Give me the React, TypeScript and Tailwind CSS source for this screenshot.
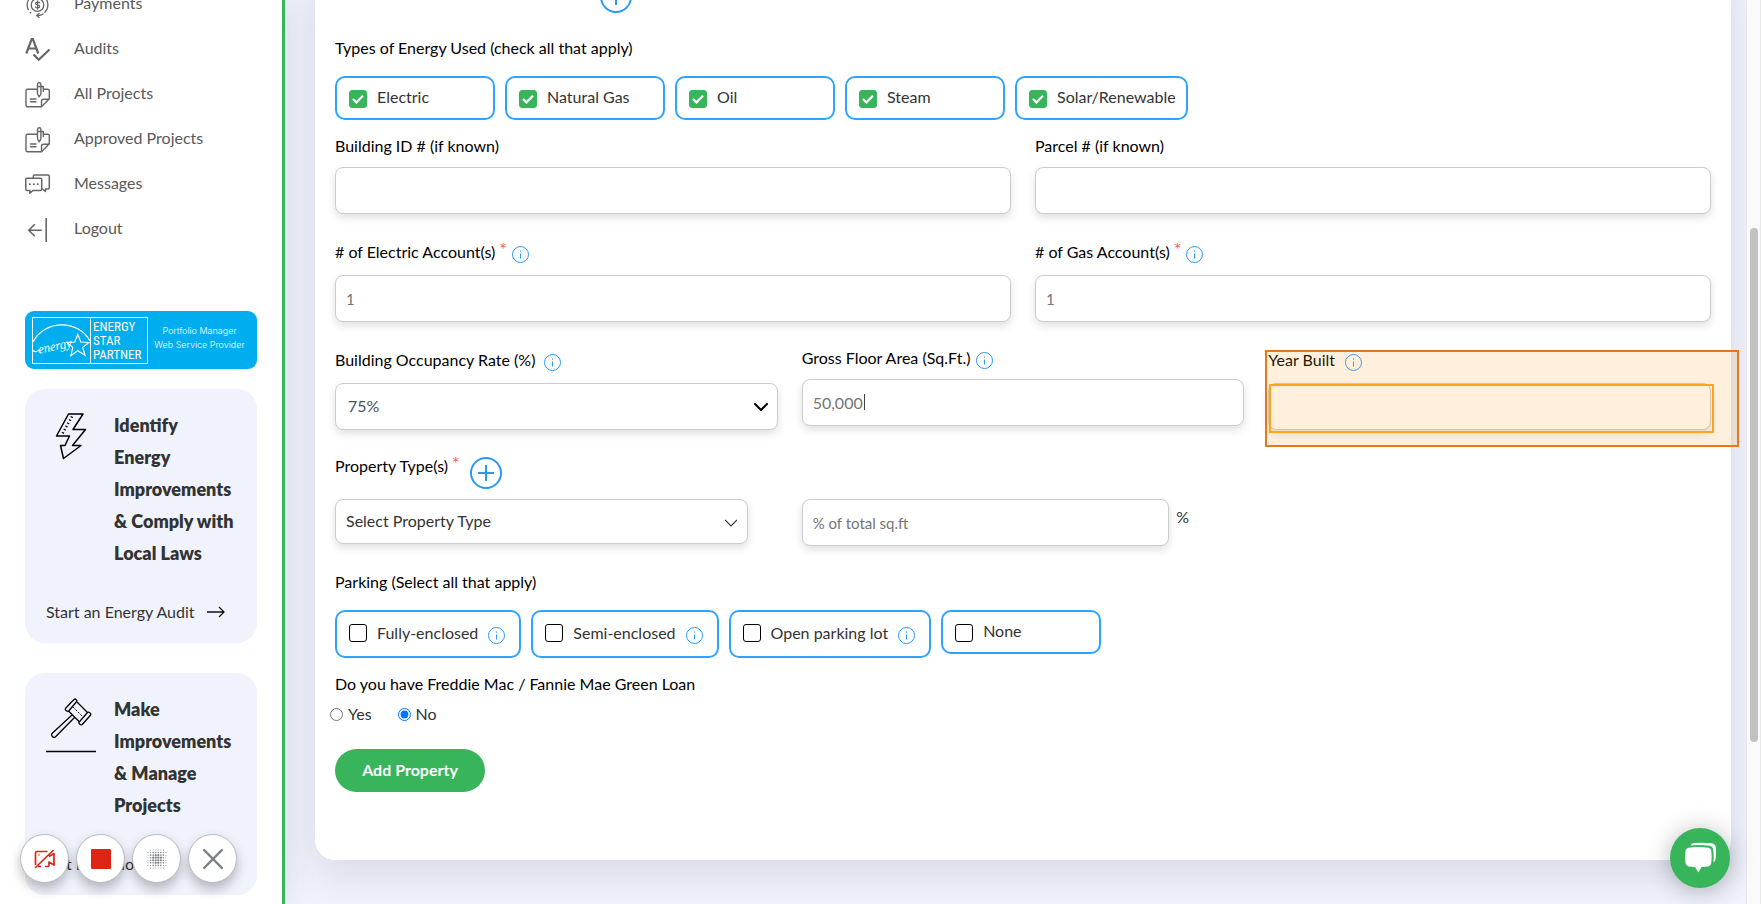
import React from "react";

const LABEL = "pb-[2px] text-base leading-[22px] text-black";
const FIELD =
  "block h-[47px] w-full rounded-lg border border-[#cccccc] bg-white shadow-[0_4px_8px_rgba(0,0,0,0.12)] outline-none";

function InfoIcon() {
  return (
    <svg width="17" height="17" viewBox="0 0 17 17" fill="none" stroke="#2699fb" className="mt-[5px] shrink-0" aria-hidden="true">
      <circle cx="8.5" cy="8.5" r="8" />
      <path d="M8.5 7.5v5M8.5 4.5v1.2" />
    </svg>
  );
}

function Star() {
  return <span className="-mt-1 ml-1 text-lg leading-6 text-[#ff5a5a]">*</span>;
}

function AddButton({ label }: { label: string }) {
  return (
    <button
      type="button"
      aria-label={label}
      className="flex size-8 shrink-0 items-center justify-center rounded-full border-2 border-[#2699fb] text-[#2699fb]"
    >
      <svg width="16" height="16" viewBox="0 0 16 16" fill="none" stroke="currentColor" strokeWidth="2" aria-hidden="true">
        <path d="M8 0v16M0 8h16" />
      </svg>
    </button>
  );
}

function PaymentsIcon() {
  return (
    <svg width="26" height="26" viewBox="0 0 26 26" fill="none" stroke="#666" strokeWidth="1.3" strokeLinecap="round" aria-hidden="true">
      <circle cx="12.5" cy="13" r="6.3" />
      <path d="M14.6 10.8c-.4-.9-3.9-1.2-4 .6 0 1.9 4.1 1.1 4.1 3.1-.1 1.8-3.7 1.7-4.2.4M12.6 9v8" />
      <path d="M19.8 20.3A10.3 10.3 0 0 0 17 3.7M8 3.7A10.3 10.3 0 0 0 3.2 17.5M12 23.5c2.5.2 4.5-.4 6-1.500M14 21.500l-2.300 2 2.300 2M5.300 20.500l.3.300" />
    </svg>
  );
}

function AuditsIcon() {
  return (
    <svg width="26" height="26" viewBox="0 0 26 26" fill="none" stroke="#666" strokeWidth="2.200" aria-hidden="true">
      <path d="M1.300 16.500L6.700 2h1.200l5.400 14.500M3.500 11.500h7.800" />
      <path d="M8.500 17.500l5.200 5.300L24.500 12.500" />
    </svg>
  );
}

function ProjectsIcon() {
  return (
    <svg width="26" height="26" viewBox="0 0 26 26" fill="none" stroke="#666" strokeWidth="1.400" strokeLinejoin="round" strokeLinecap="round" aria-hidden="true">
      <path d="M12 7.200H2.500a1.500 1.500 0 0 0-1.500 1.500v14.600a1.500 1.500 0 0 0 1.500 1.500h14l7.800-8V8.700a1.500 1.500 0 0 0-1.500-1.500h-3.500" />
      <path d="M16.500 24.500v-5.300a2 2 0 0 1 2-2h5.300" />
      <path d="M12.500 12V2.500a1.700 1.700 0 0 1 3.400 0V12l-1.700 2.800zM12.500 4.500h3.400M16 4.500h2.300v5" />
      <path d="M5.500 17h5.500M5.500 19.800h5.500" />
    </svg>
  );
}

function MessagesIcon() {
  return (
    <svg width="26" height="26" viewBox="0 0 26 26" fill="none" stroke="#666" strokeWidth="1.500" strokeLinejoin="round" strokeLinecap="round" aria-hidden="true">
      <path d="M2 6.200h13.500a1.200 1.200 0 0 1 1.200 1.200v9.800a1.200 1.200 0 0 1-1.200 1.200H8L4.800 21.200v-2.800H2a1.200 1.200 0 0 1-1.200-1.200V7.400A1.200 1.200 0 0 1 2 6.200z" />
      <path d="M8.300 6V4.200A1.200 1.200 0 0 1 9.500 3h13.600a1.200 1.200 0 0 1 1.200 1.200v11.600a1.200 1.200 0 0 1-1.200 1.200h-2.600v2.500L17.500 17" />
      <path d="M4.800 12.200h.2M8.700 12.200h.2M12.600 12.200h.2" strokeWidth="1.800" />
    </svg>
  );
}

function LogoutIcon() {
  return (
    <svg width="26" height="26" viewBox="0 0 26 26" fill="none" stroke="#666" strokeWidth="1.600" aria-hidden="true">
      <path d="M21.200 1v24M16.800 13.200H4M9.800 7.200l-6 6 6 6" />
    </svg>
  );
}

const NAV = [
  { label: "Payments", Icon: PaymentsIcon },
  { label: "Audits", Icon: AuditsIcon },
  { label: "All Projects", Icon: ProjectsIcon },
  { label: "Approved Projects", Icon: ProjectsIcon },
  { label: "Messages", Icon: MessagesIcon },
  { label: "Logout", Icon: LogoutIcon },
];

function BoltIcon() {
  return (
    <svg width="50" height="60" viewBox="0 0 50 60" fill="none" stroke="#000" strokeWidth="1.500" strokeLinejoin="round" className="shrink-0" aria-hidden="true">
      <path d="M22.500 5H37L27 20.500h12.500L26.500 36.500h8.500L17.500 49.500 14.500 36.500h4.500l4.500-9.500H10.500z" />
      <path d="M26 7.500L16 25.500" strokeWidth="2.500" strokeDasharray="1.200 2.400" />
    </svg>
  );
}

function GavelIcon() {
  return (
    <svg width="50" height="60" viewBox="0 0 50 60" fill="none" stroke="#000" strokeWidth="1.300" strokeLinejoin="round" className="shrink-0" aria-hidden="true">
      <path d="M25 9.500l3.500-3.300c1-.7 3 1.300 2.200 2.300l-8 9.500c-1.300 1.300-4.200-1-3.300-2.500z" />
      <path d="M31 9l10.500 10.500M22.500 18l11 11" />
      <path d="M41.500 19.500c1.200-1.200 4 1 3.200 2.500l-8.500 9.500c-1.300 1.300-4-1-3.200-2.300z" />
      <path d="M26 22L6 40.500c-1.500 1.700 1.300 5 3.300 3.500L28.500 24.500" />
      <path d="M27 14l9 9" strokeDasharray="2 1.500" strokeWidth="1" />
      <path d="M0 58.500h50" strokeWidth="1.400" />
    </svg>
  );
}

function PromoCard({ icon, title, link }: { icon: React.ReactNode; title: string; link: string }) {
  return (
    <section className="rounded-[20px] bg-[#f0f3fc] px-[21px] pt-5 pb-[15px]">
      <div className="flex gap-[18px]">
        {icon}
        <h2 className="w-[122px] text-lg leading-8 font-extrabold text-[#333]">{title}</h2>
      </div>
      <a href="#" className="mt-[27px] flex items-center gap-3 text-base leading-8 whitespace-nowrap text-[#333]">
        {link}
        <svg width="18" height="12" viewBox="0 0 18 12" fill="none" stroke="#111" strokeWidth="1.300" aria-hidden="true">
          <path d="M0 6h17M12 1l5 5-5 5" />
        </svg>
      </a>
    </section>
  );
}

function EnergyStarBadge() {
  return (
    <div className="flex h-[58px] items-center rounded-[9px] bg-[#00aeef] pr-[6px] pl-[7px] text-white">
      <div className="flex h-[47px] w-[116px] shrink-0 border border-white">
        <svg width="58" height="45" viewBox="0 0 58 45" fill="none" stroke="#fff" strokeWidth="1.200" className="shrink-0 border-r border-white" aria-label="Energy Star logo">
          <path d="M0 24C12 1 46 1 58 23" />
          <path d="M45.500 16.500l3.200 7.500 8.300.5-6.500 5 2.500 8-7.500-4.500-7 5 2-8.500-6-5 8-.5z" />
          <path d="M0 33c3 1.500 4 1 6-1" />
          <text x="6" y="36" fill="#fff" stroke="none" fontSize="13" fontStyle="italic" fontFamily="Liberation Serif, serif" transform="rotate(-12 6 36)">
            energy
          </text>
        </svg>
        <p className="pt-[2px] pl-[2px] font-['Liberation_Sans_Narrow','Roboto_Condensed','Liberation_Sans',sans-serif] text-[13px] leading-[14px]">
          ENERGY
          <br />
          STAR
          <br />
          PARTNER
        </p>
      </div>
      <p className="-mt-1 flex-1 text-center font-['Inter',sans-serif] text-[9px] leading-[14px] font-light whitespace-nowrap">
        Portfolio Manager
        <br />
        Web Service Provider
      </p>
    </div>
  );
}

function CheckChip({ id, label, checked = false, info = false }: { id: string; label: string; checked?: boolean; info?: boolean }) {
  return (
    <label
      htmlFor={id}
      className={
        "flex min-w-40 items-start rounded-[10px] border-2 border-[#2fa4ff] pl-3 text-base leading-[22px] text-[#333] " +
        (info ? "h-12 pt-[10px] pr-[14px]" : "h-11 pt-2 pr-[10px]")
      }
    >
      <span className={"relative block size-[18px] shrink-0 " + (info ? "mt-[2px]" : "mt-1")}>
        <input
          id={id}
          type="checkbox"
          defaultChecked={checked}
          className="peer block size-[18px] appearance-none rounded-[3px] border border-black bg-white checked:border-[#38b45b] checked:bg-[#38b45b]"
        />
        <svg width="18" height="18" viewBox="0 0 18 18" fill="none" stroke="#fff" strokeWidth="2.200" className="pointer-events-none absolute inset-0 hidden peer-checked:block" aria-hidden="true">
          <path d="M4 9l3.400 3.400L14 5.800" />
        </svg>
      </span>
      <span className="ml-[10px] whitespace-nowrap">{label}</span>
      {info && (
        <span className="ml-[10px]">
          <InfoIcon />
        </span>
      )}
    </label>
  );
}

function RecorderControls() {
  const button =
    "flex size-[49px] items-center justify-center rounded-full border border-[#b4bac0] bg-white shadow-[0_6px_12px_rgba(0,0,0,0.25)]";
  const dots = [0, 1, 2, 3, 4, 5, 6, 7];
  const dotSize = (r: number, c: number) => {
    const d = Math.hypot(r - 3.5, c - 3.5);
    return d > 4.5 ? 0 : d > 3.4 ? 0.5 : d > 2 ? 0.8 : 1.1;
  };
  return (
    <div className="fixed bottom-[21px] left-5 z-20 flex gap-[7px]">
      <button type="button" aria-label="Turn camera off" className={button}>
        <svg width="22" height="20" viewBox="0 0 22 20" fill="none" stroke="#e02317" strokeWidth="1.700" strokeLinejoin="round" aria-hidden="true">
          <path d="M11 17.500h2.500a1.500 1.500 0 0 0 1.500-1.500v-3l5 3V4.500L15 7.500M13.500 2.500H3A1.500 1.500 0 0 0 1.500 4v12M4 17.500h3M1 19L19.500 1M4.500 6h1" />
        </svg>
      </button>
      <button type="button" aria-label="Stop recording" className={button}>
        <span className="size-5 rounded-[1px] bg-[#e02317]" />
      </button>
      <button type="button" aria-label="Blur background" className={button}>
        <svg width="20" height="20" viewBox="0 0 20 20" fill="#7d8387" aria-hidden="true">
          {dots.map((r) => dots.map((c) => <circle key={r + "-" + c} cx={1 + c * 2.57} cy={1 + r * 2.57} r={dotSize(r, c)} />))}
        </svg>
      </button>
      <button type="button" aria-label="Close" className={button}>
        <svg width="20" height="20" viewBox="0 0 20 20" fill="none" stroke="#7d8387" strokeWidth="2.400" strokeLinecap="round" aria-hidden="true">
          <path d="M1.200 1.200l17.600 17.600M18.800 1.200L1.200 18.800" />
        </svg>
      </button>
    </div>
  );
}

export default function App() {
  return (
    <div className="flex h-screen overflow-hidden bg-white font-['Lato','Liberation_Sans',sans-serif]">
      <aside className="z-10 w-[285px] shrink-0 border-r-3 border-[#38b45b] bg-white px-[25px] shadow-[0_0_30px_rgba(60,60,100,0.12)]">
        <nav className="-mt-[18px]">
          <ul>
            {NAV.map(({ label, Icon }) => (
              <li key={label}>
                <a href="#" className="flex h-[45px] items-center gap-[23px] text-base text-[#595959]">
                  <Icon />
                  <span className="pb-[3px]">{label}</span>
                </a>
              </li>
            ))}
          </ul>
        </nav>
        <div className="mt-[59px] flex flex-col">
          <EnergyStarBadge />
          <div className="mt-5 flex flex-col gap-[30px]">
            <PromoCard icon={<BoltIcon />} title="Identify Energy Improvements & Comply with Local Laws" link="Start an Energy Audit" />
            <PromoCard icon={<GavelIcon />} title="Make Improvements & Manage Projects" link="Get Help Now" />
          </div>
        </div>
      </aside>

      <main className="min-w-0 flex-1 overflow-hidden bg-[#f0f3fc] pr-[15px] pl-[30px]">
        <form className="-mt-[39px] rounded-[20px] bg-white px-5 pt-5 pb-[68px] shadow-[0_15px_40px_rgba(40,40,80,0.12)]">
          <div className="pl-[265px]">
            <AddButton label="Add another" />
          </div>

          <fieldset className="mt-6">
            <legend className={LABEL}>Types of Energy Used (check all that apply)</legend>
            <div className="mt-[15px] flex flex-wrap gap-[10px]">
              <CheckChip id="electric" label="Electric" checked />
              <CheckChip id="gas" label="Natural Gas" checked />
              <CheckChip id="oil" label="Oil" checked />
              <CheckChip id="steam" label="Steam" checked />
              <CheckChip id="solar" label="Solar/Renewable" checked />
            </div>
          </fieldset>

          <div className="mt-[15px] grid grid-cols-2 gap-6">
            <div>
              <label htmlFor="building-id" className={LABEL + " block"}>Building ID # (if known)</label>
              <input id="building-id" type="text" className={FIELD + " mt-2 px-[10px] text-[15px]"} />
            </div>
            <div>
              <label htmlFor="parcel" className={LABEL + " block"}>Parcel # (if known)</label>
              <input id="parcel" type="text" className={FIELD + " mt-2 px-[10px] text-[15px]"} />
            </div>
          </div>

          <div className="mt-[27px] grid grid-cols-2 gap-6">
            <div>
              <label htmlFor="electric-accounts" className={LABEL + " flex h-6 items-start"}>
                # of Electric Account(s)
                <Star />
                <span className="ml-[5px]"><InfoIcon /></span>
              </label>
              <input id="electric-accounts" type="text" placeholder="1" className={FIELD + " mt-[10px] px-[10px] text-[15px] placeholder:text-[#757575]"} />
            </div>
            <div>
              <label htmlFor="gas-accounts" className={LABEL + " flex h-6 items-start"}>
                # of Gas Account(s)
                <Star />
                <span className="ml-[5px]"><InfoIcon /></span>
              </label>
              <input id="gas-accounts" type="text" placeholder="1" className={FIELD + " mt-[10px] px-[10px] text-[15px] placeholder:text-[#757575]"} />
            </div>
          </div>

          <div className="mt-[25px] grid grid-cols-3 gap-6">
            <div className="pt-[2px]">
              <label htmlFor="occupancy" className={LABEL + " flex h-6 items-start gap-[9px]"}>
                Building Occupancy Rate (%)
                <InfoIcon />
              </label>
              <div className="relative mt-[10px]">
                <select id="occupancy" defaultValue="75" className={FIELD + " appearance-none px-3 pb-[2px] text-base text-[#495057]"}>
                  <option value="75">75%</option>
                </select>
                <svg width="14" height="8" viewBox="0 0 14 8" fill="none" stroke="#000" strokeWidth="2" strokeLinecap="round" className="pointer-events-none absolute top-5 right-[10px]" aria-hidden="true">
                  <path d="M1 1l6 6 6-6" />
                </svg>
              </div>
            </div>
            <div>
              <label htmlFor="floor-area" className={LABEL + " flex h-6 items-start gap-[5px]"}>
                Gross Floor Area (Sq.Ft.)
                <InfoIcon />
              </label>
              <div className="relative mt-2">
                <input id="floor-area" type="text" defaultValue="50,000" className={FIELD + " px-[10px] text-base text-[#757575]"} />
                <span className="absolute top-[15px] left-[62px] h-4 w-px bg-[#444]" />
              </div>
            </div>
            <div className="relative pt-[2px]">
              <label htmlFor="year-built" className={LABEL + " flex h-6 items-start gap-[10px]"}>
                Year Built
                <InfoIcon />
              </label>
              <input id="year-built" type="text" className={FIELD + " mt-[10px] px-[10px] text-[15px]"} />
              <div className="pointer-events-none absolute top-[3px] -right-7 -left-[3px] h-[97px] border-2 border-[#e8761c] bg-[#ff9a1f]/15">
                <div className="absolute top-8 right-[23px] left-[2px] h-[49px] border-2 border-[#ffa51c]" />
              </div>
            </div>
          </div>

          <div className="mt-[25px] flex h-[34px] items-start">
            <label htmlFor="property-type" className={LABEL + " flex h-6 items-start"}>
              Property Type(s)
              <Star />
            </label>
            <span className="mt-[2px] ml-[10px]"><AddButton label="Add property type" /></span>
          </div>
          <div className="mt-[10px] grid grid-cols-3 gap-6">
            <div className="relative mr-[30px] h-[45px]">
              <select id="property-type" className="block h-[45px] w-full appearance-none rounded-lg border border-[#cccccc] bg-white px-[10px] pb-[2px] text-base text-[#333] shadow-[0_4px_8px_rgba(0,0,0,0.12)] outline-none">
                <option>Select Property Type</option>
              </select>
              <svg width="12" height="8" viewBox="0 0 12 8" fill="none" stroke="#333" strokeWidth="1.200" className="pointer-events-none absolute top-5 right-[11px]" aria-hidden="true">
                <path d="M0 1l6 6 6-6" />
              </svg>
            </div>
            <div className="flex items-start gap-[7px] pr-[56px] text-[#333]">
              <input type="text" aria-label="Percent of total square feet" placeholder="% of total sq.ft" className={FIELD + " min-w-0 flex-1 px-[10px] text-[15px] placeholder:text-[#757575]"} />
              <span className="mt-[6px] w-3 text-base leading-6">%</span>
            </div>
          </div>

          <fieldset className="mt-[25px]">
            <legend className={LABEL}>Parking (Select all that apply)</legend>
            <div className="mt-[15px] flex flex-wrap items-start gap-[10px]">
              <CheckChip id="fully-enclosed" label="Fully-enclosed" info />
              <CheckChip id="semi-enclosed" label="Semi-enclosed" info />
              <CheckChip id="open-lot" label="Open parking lot" info />
              <CheckChip id="no-parking" label="None" />
            </div>
          </fieldset>

          <fieldset className="mt-[15px]">
            <legend className={LABEL}>Do you have Freddie Mac / Fannie Mae Green Loan</legend>
            <div className="mt-[5px] mb-px -ml-[5px] flex gap-[26px] text-base leading-6 text-[#333]">
              <label className="flex items-center gap-[5px]">
                <input type="radio" name="green-loan" className="size-[13px] accent-[#0075ff]" />
                Yes
              </label>
              <label className="flex items-center gap-[5px]">
                <input type="radio" name="green-loan" defaultChecked className="size-[13px] accent-[#0075ff]" />
                No
              </label>
            </div>
          </fieldset>

          <button type="button" className="mt-[22px] block h-[43px] w-[150px] rounded-full bg-[#38b45b] pb-[2px] text-base font-bold text-white">
            Add Property
          </button>
        </form>
      </main>

      <div className="flex w-[15px] shrink-0 justify-center border-x border-[#e8e8e8] bg-[#fafafa] pt-[228px]" aria-hidden="true">
        <div className="h-[514px] w-2 rounded-full bg-[#c1c1c1]" />
      </div>

      <RecorderControls />

      <button
        type="button"
        aria-label="Open chat"
        className="fixed right-[31px] bottom-4 flex size-[60px] items-center justify-center rounded-full bg-[#38b45b] shadow-[0_2px_24px_rgba(0,0,0,0.28)]"
      >
        <svg width="32" height="32" viewBox="0 0 32 32" fill="#fff" aria-hidden="true">
          <path d="M4.500 5.800Q14.500 4 24.500 5.800Q27 6.300 27.300 8.800Q28 15 27.300 21Q27 24 24.500 24.400L17.500 25L14.300 30.500L11 25L4.500 24.400Q2 24 1.500 21Q.6 15 1.500 8.800Q2 6.300 4.500 5.800z" />
          <path d="M6.500 3.500Q7.500 1.200 10 1Q19 .4 28 1.200Q31.200 1.700 31.700 4.800Q32.400 11 31.600 17Q31.200 19.500 29.500 20.500Q30 13 29.200 7.500Q28.700 4.200 25.500 3.700Q15 2.500 6.500 3.500z" />
        </svg>
      </button>
    </div>
  );
}
